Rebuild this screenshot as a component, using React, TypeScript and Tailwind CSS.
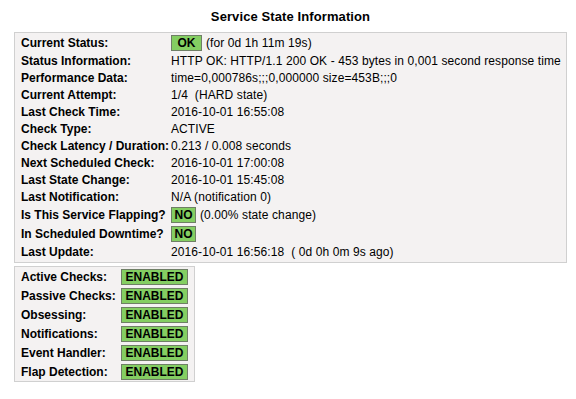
import React from "react";

const Badge = ({ text, w }: { text: string; w: string }) => (
  <span
    className={`inline-flex items-center justify-center h-[16px] bg-[#84ce62] border border-[#6f7f66] font-bold ${w}`}
  >
    {text}
  </span>
);

type Row = { label: string; value: React.ReactNode; tall?: boolean };

const rows: Row[] = [
  {
    label: "Current Status:",
    tall: true,
    value: (
      <span className="flex items-center gap-[4px]">
        <Badge text="OK" w="w-[31px]" />
        <span>(for 0d 1h 11m 19s)</span>
      </span>
    ),
  },
  { label: "Status Information:", value: "HTTP OK: HTTP/1.1 200 OK - 453 bytes in 0,001 second response time" },
  { label: "Performance Data:", value: "time=0,000786s;;;0,000000 size=453B;;;0" },
  { label: "Current Attempt:", value: "1/4  (HARD state)" },
  { label: "Last Check Time:", value: "2016-10-01 16:55:08" },
  { label: "Check Type:", value: "ACTIVE" },
  { label: "Check Latency / Duration:", value: "0.213 / 0.008 seconds" },
  { label: "Next Scheduled Check:", value: "2016-10-01 17:00:08" },
  { label: "Last State Change:", value: "2016-10-01 15:45:08" },
  { label: "Last Notification:", value: "N/A (notification 0)" },
  {
    label: "Is This Service Flapping?",
    tall: true,
    value: (
      <span className="flex items-center gap-[4px]">
        <Badge text="NO" w="w-[25px]" />
        <span>(0.00% state change)</span>
      </span>
    ),
  },
  {
    label: "In Scheduled Downtime?",
    tall: true,
    value: <Badge text="NO" w="w-[25px]" />,
  },
  { label: "Last Update:", value: "2016-10-01 16:56:18  ( 0d 0h 0m 9s ago)" },
];

const checks = [
  "Active Checks:",
  "Passive Checks:",
  "Obsessing:",
  "Notifications:",
  "Event Handler:",
  "Flap Detection:",
];

export default function App() {
  return (
    <div
      className="w-[576px] h-[399px] bg-white text-black text-[12px] leading-[14px]"
      style={{ fontFamily: '"Liberation Sans", Arial, sans-serif' }}
    >
      <div className="ml-[14px] w-[553px]">
        <div className="h-[32px] flex items-center justify-center pt-[2px] font-bold text-[13px] tracking-[0.1px]">
          Service State Information
        </div>
        <div className="bg-[#f4f2f2] border border-[#d0d0d0] pl-[6px] pb-[2px]">
          {rows.map((r) => (
            <div
              key={r.label}
              className={`grid grid-cols-[150px_1fr] items-center whitespace-pre ${r.tall ? "h-[19px]" : "h-[17px]"}`}
            >
              <span className="font-bold">{r.label}</span>
              <span className="tracking-[0.1px]">{r.value}</span>
            </div>
          ))}
        </div>
      </div>
      <div className="ml-[14px] mt-[3px] w-[181px] bg-[#f4f2f2] border border-[#d0d0d0] pl-[6px]">
        {checks.map((c) => (
          <div key={c} className="grid grid-cols-[100px_1fr] items-center h-[19px]">
            <span className="font-bold">{c}</span>
            <Badge text="ENABLED" w="w-[67px]" />
          </div>
        ))}
      </div>
    </div>
  );
}
